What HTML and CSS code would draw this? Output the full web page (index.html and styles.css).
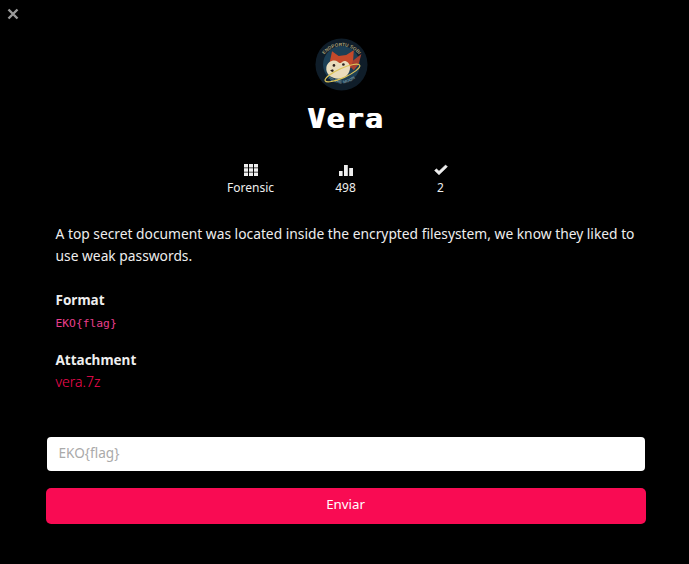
FILE: index.html
```html
<!DOCTYPE html>
<html lang="en">
<head>
  <meta charset="UTF-8">
  <title>Vera</title>
  <link rel="stylesheet" href="styles.css">
</head>
<body>
  <button class="close" type="button" aria-label="Close">
    <svg viewBox="0 0 12 12" width="12" height="12"><path d="M1.5 1.5l9 9M10.5 1.5l-9 9" stroke="#9a9a9a" stroke-width="2.4" fill="none"/></svg>
  </button>

  <div class="modal">
    <!-- logo -->
    <svg class="logo" viewBox="0 0 56 56" width="53" height="53">
      <defs>
        <path id="logo-top" d="M5.5 31A22.5 22.5 0 0 1 50.5 31"/>
        <path id="logo-bottom" d="M9 36A21 21 0 0 0 47 36"/>
      </defs>
      <circle cx="28" cy="28" r="27.5" fill="#0f1d29"/>
      <circle cx="28" cy="28" r="19.5" fill="#1c3f55"/>
      <text class="logo-text"><textPath href="#logo-top" startOffset="50%" text-anchor="middle">ENDPORTU SOBI</textPath></text>
      <text class="logo-text logo-text-low"><textPath href="#logo-bottom" startOffset="50%" text-anchor="middle">TO THE MOON</textPath></text>
      <path d="M15 28l3-14 7 5 8-1 8-5-1 15-5 7-16 0z" fill="#c4492a"/>
      <path d="M12 31c1-6 8-9 12-6 2 2 3 2 5 0 3-2 8 1 8 6 0 7-5 12-12 12-8 0-14-5-13-12z" fill="#e9dcbc"/>
      <circle cx="20" cy="29" r="1.4" fill="#2b2220"/>
      <circle cx="30" cy="28" r="1.4" fill="#2b2220"/>
      <path d="M16 34l3-1 1 2-2 1z" fill="#2b2220"/>
      <path d="M40 24l9-7-3 11-5 6-3-3z" fill="#a8402f"/>
      <ellipse cx="29" cy="37" rx="20" ry="5" transform="rotate(-24 29 37)" fill="none" stroke="#dcc45a" stroke-width="1.3"/>
    </svg>

    <h1 class="title">Vera</h1>

    <div class="stats">
      <div class="stat">
        <svg viewBox="0 0 14 12" width="14" height="12"><path fill="#eee" d="M0 0h4v3.4H0zM5 0h4v3.4H5zM10 0h4v3.4h-4zM0 4.3h4v3.4H0zM5 4.3h4v3.4H5zM10 4.3h4v3.4h-4zM0 8.6h4V12H0zM5 8.6h4V12H5zM10 8.6h4V12h-4z"/></svg>
        <span>Forensic</span>
      </div>
      <div class="stat">
        <svg viewBox="0 0 14 12" width="14" height="12"><path fill="#eee" d="M0 7h3.6v5H0zM5 1h3.8v11H5zM10.2 4H14v8h-3.8z"/></svg>
        <span>498</span>
      </div>
      <div class="stat">
        <svg viewBox="0 0 14 12" width="14" height="12"><path fill="#eee" stroke="#eee" stroke-width=".6" stroke-linejoin="round" d="M5 10.8L.6 6.6l1.8-1.8L5 7.2 11.6 1 13.4 2.8z"/></svg>
        <span>2</span>
      </div>
    </div>

    <div class="details">
      <p class="desc">A top secret document was located inside the encrypted filesystem, we know they liked to use weak passwords.</p>
      <h2>Format</h2>
      <code class="format">EKO{flag}</code>
      <h2 class="attach-head">Attachment</h2>
      <a class="attach" href="#">vera.7z</a>
    </div>

    <form class="flag-form">
      <input class="flag-input" type="text" placeholder="EKO{flag}">
      <button class="send" type="button">Enviar</button>
    </form>
  </div>
</body>
</html>
```

FILE: styles.css
```css
html, body {
  height: 100%;
}
body {
  margin: 0;
  background: #000;
  color: #eee;
  font-family: "Noto Sans", "Open Sans", sans-serif;
  font-size: 14px;
  overflow: hidden;
}
.close {
  position: absolute;
  top: 8px;
  left: 7px;
  padding: 0;
  border: 0;
  background: none;
  line-height: 0;
}
.modal {
  display: flex;
  flex-direction: column;
  align-items: center;
  width: 600px;
  margin: 0 auto;
  padding-top: 38px;
  transform: translateX(1px);
}
.logo {
  display: block;
  margin-right: 9px;
}
.logo-text {
  font-family: "Liberation Sans", sans-serif;
  font-size: 5px;
  font-weight: 700;
  fill: #a89d74;
}
.logo-text-low {
  fill: #6f8a94;
  font-size: 4.5px;
}
.title {
  margin: 10px 0 0;
  font-family: "DejaVu Sans Mono", monospace;
  font-size: 26px;
  line-height: 36px;
  font-weight: 700;
  color: #fff;
  letter-spacing: 1px;
  text-shadow: 1px 0 #fff;
  transform: scaleX(1.15);
}
.stats {
  display: grid;
  grid-template-columns: repeat(3, 95px);
  margin-top: 27px;
}
.stat {
  display: flex;
  flex-direction: column;
  align-items: center;
  gap: 4px;
  font-size: 12px;
  line-height: 16px;
}
.details {
  align-self: stretch;
  padding: 0 5px 0 10px;
  margin-top: 27px;
}
.desc {
  margin: 0;
  font-size: 13.8px;
  line-height: 22px;
}
.details h2 {
  margin: 23px 0 0;
  font-size: 13.5px;
  line-height: 20px;
  font-weight: 700;
  color: #eee;
}
.details .attach-head {
  margin-top: 19px;
}
.format {
  display: block;
  margin-top: 6px;
  margin-bottom: -1px;
  font-family: "DejaVu Sans Mono", monospace;
  font-size: 11.3px;
  line-height: 16px;
  color: #e83e8c;
}
.attach {
  display: block;
  margin-top: 3px;
  font-size: 14px;
  line-height: 18px;
  font-weight: 300;
  color: #f90b53;
  text-decoration: none;
}
.flag-form {
  align-self: stretch;
  display: flex;
  flex-direction: column;
  margin-top: 46px;
}
.flag-input {
  box-sizing: border-box;
  height: 34px;
  margin: 0 1px;
  padding: 0 12px 4px;
  border: 0;
  border-radius: 4px;
  background: #fff;
  font-family: inherit;
  font-size: 13.6px;
}
.flag-input::placeholder {
  color: #aaa;
  opacity: 1;
}
.send {
  height: 36px;
  margin-top: 17px;
  padding-bottom: 5px;
  border: 0;
  border-radius: 5px;
  background: #f90b53;
  color: #fff;
  font-family: inherit;
  font-size: 13.3px;
}
```
